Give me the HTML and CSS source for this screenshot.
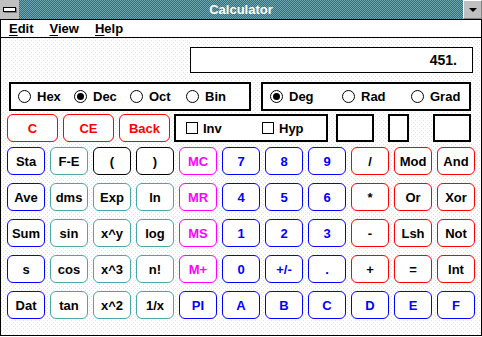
FILE: index.html
```html
<!DOCTYPE html>
<html lang="en">
<head>
  <meta charset="UTF-8" />
  <title>Calculator</title>
  <link rel="stylesheet" href="styles.css">
</head>
<body>
  <div class="window">
    <div class="titlebar">
      <div class="sysbox"><span class="sysbar"></span></div>
      <div class="title">Calculator</div>
      <div class="minbtn"><span class="tri"></span></div>
    </div>

    <div class="frame">
      <div class="menubar">
        <span class="menu"><u>E</u>dit</span>
        <span class="menu"><u>V</u>iew</span>
        <span class="menu"><u>H</u>elp</span>
      </div>

      <div class="panel">
        <div class="display-row">
          <div class="display">451.</div>
        </div>

        <div class="mode-row">
          <div class="group base">
            <span class="radio w56"><span class="circle"></span>Hex</span>
            <span class="radio w56"><span class="circle on"></span>Dec</span>
            <span class="radio w56"><span class="circle"></span>Oct</span>
            <span class="radio"><span class="circle"></span>Bin</span>
          </div>
          <div class="group angle">
            <span class="radio w72"><span class="circle on"></span>Deg</span>
            <span class="radio w69"><span class="circle"></span>Rad</span>
            <span class="radio"><span class="circle"></span>Grad</span>
          </div>
        </div>

        <div class="ctrl-row">
          <button class="btn clear red-text">C</button>
          <button class="btn clear red-text">CE</button>
          <button class="btn clear red-text">Back</button>
          <div class="group checks">
            <span class="check w76"><span class="square"></span>Inv</span>
            <span class="check"><span class="square"></span>Hyp</span>
          </div>
          <div class="group mem m1"></div>
          <div class="group mem m2"></div>
          <div class="group mem m3"></div>
        </div>

        <div class="keys">
          <button class="btn stat">Sta</button>
          <button class="btn sci">F-E</button>
          <button class="btn plain">(</button>
          <button class="btn plain">)</button>
          <button class="btn memk">MC</button>
          <button class="btn digit">7</button>
          <button class="btn digit">8</button>
          <button class="btn digit">9</button>
          <button class="btn op">/</button>
          <button class="btn op">Mod</button>
          <button class="btn op">And</button>

          <button class="btn stat">Ave</button>
          <button class="btn sci">dms</button>
          <button class="btn sci">Exp</button>
          <button class="btn sci">ln</button>
          <button class="btn memk">MR</button>
          <button class="btn digit">4</button>
          <button class="btn digit">5</button>
          <button class="btn digit">6</button>
          <button class="btn op">*</button>
          <button class="btn op">Or</button>
          <button class="btn op">Xor</button>

          <button class="btn stat">Sum</button>
          <button class="btn sci">sin</button>
          <button class="btn sci">x^y</button>
          <button class="btn sci">log</button>
          <button class="btn memk">MS</button>
          <button class="btn digit">1</button>
          <button class="btn digit">2</button>
          <button class="btn digit">3</button>
          <button class="btn op">-</button>
          <button class="btn op">Lsh</button>
          <button class="btn op">Not</button>

          <button class="btn stat">s</button>
          <button class="btn sci">cos</button>
          <button class="btn sci">x^3</button>
          <button class="btn sci">n!</button>
          <button class="btn memk">M+</button>
          <button class="btn digit">0</button>
          <button class="btn digit">+/-</button>
          <button class="btn digit">.</button>
          <button class="btn op">+</button>
          <button class="btn op">=</button>
          <button class="btn op">Int</button>

          <button class="btn stat">Dat</button>
          <button class="btn sci">tan</button>
          <button class="btn sci">x^2</button>
          <button class="btn sci">1/x</button>
          <button class="btn digit">PI</button>
          <button class="btn digit">A</button>
          <button class="btn digit">B</button>
          <button class="btn digit">C</button>
          <button class="btn digit">D</button>
          <button class="btn digit">E</button>
          <button class="btn digit">F</button>
        </div>
      </div>
    </div>
  </div>
</body>
</html>
```

FILE: styles.css
```css
* { box-sizing: border-box; }
body { margin: 0; background: #fff; font-family: "Liberation Sans", Arial, sans-serif; font-weight: bold; font-size: 13px; color: #000; }

.window { width: 482px; height: 336px; display: flex; flex-direction: column; }

/* title bar */
.titlebar { height: 20px; display: flex; border-bottom: 1px solid #000; background: repeating-conic-gradient(#3464a4 0 25%, #70a8b0 0 50%) 0 0 / 2px 2px; }
.sysbox { width: 19px; background: #c0c0c0; display: flex; align-items: center; justify-content: center; }
.sysbar { width: 13px; height: 5px; background: #fff; border: 1px solid #000; box-shadow: 1px 1px 0 #808080; }
.title { flex: 1; color: #fff; text-align: center; line-height: 19px; }
.minbtn { width: 19px; background: #c0c0c0; border-top: 1px solid #fff; border-left: 1px solid #fff; border-right: 1px solid #808080; border-bottom: 1px solid #808080; display: flex; align-items: center; justify-content: center; }
.tri { width: 0; height: 0; border-left: 4px solid transparent; border-right: 4px solid transparent; border-top: 4px solid #000; }

/* frame + menu */
.frame { flex: 1; border: 1px solid #000; border-top: 0; display: flex; flex-direction: column; }
.menubar { height: 18px; border-bottom: 1px solid #000; display: flex; gap: 16px; padding-left: 8px; line-height: 17px; background: #fff; }
.menu u { text-decoration-thickness: 1px; text-underline-offset: 2px; }

/* dotted yellow dither behind the keypad */
.panel { flex: 1; padding-left: 6px; background: #fff url("data:image/svg+xml;utf8,<svg xmlns='http://www.w3.org/2000/svg' width='4' height='4' shape-rendering='crispEdges'><rect width='1' height='1' fill='%23ffff00'/><rect x='2' y='2' width='1' height='1' fill='%23ffff00'/></svg>") 0 0 / 4px 4px; }

.display-row { margin-top: 9px; display: flex; justify-content: flex-end; padding-right: 8px; }
.display { width: 283px; height: 26px; border: 1px solid #000; background: #fff; text-align: right; padding-right: 15px; font-size: 14px; line-height: 24px; }

.group { border: 2px solid #000; background: #fff; display: flex; align-items: center; }

.mode-row { margin-top: 9px; display: flex; height: 29px; }
.base { margin-left: 2px; width: 242px; padding-left: 7px; }
.angle { margin-left: 10px; width: 210px; padding-left: 7px; }

.radio, .check { display: flex; align-items: center; }
.w56 { width: 56px; }
.w72 { width: 72px; }
.w69 { width: 69px; }
.w76 { width: 76px; }
.circle { width: 13px; height: 13px; border: 1px solid #000; border-radius: 50%; margin-right: 6px; display: flex; align-items: center; justify-content: center; }
.circle.on::after { content: ""; width: 7px; height: 7px; border-radius: 50%; background: #000; }
.square { width: 12px; height: 12px; border: 1px solid #000; margin-right: 5px; }

.ctrl-row { margin-top: 3px; display: flex; height: 28px; }
.clear { width: 51px; margin-right: 5px; }
.checks { width: 154px; padding-left: 10px; margin-left: -1px; }
.m1 { width: 38px; margin-left: 8px; }
.m2 { width: 21px; margin-left: 14px; }
.m3 { width: 38px; margin-left: 24px; }

.keys { margin-top: 5px; display: grid; grid-template-columns: repeat(11, 38px); grid-auto-rows: 28px; column-gap: 5px; row-gap: 8px; }

.btn { font: inherit; padding: 0; background: #fff; border: 1px solid #000; border-radius: 6px; color: #000; }
.red-text { border-color: #ff0000; color: #ff0000; }
.stat { border-color: #0000ff; }
.sci { border-color: #48a8a8; }
.plain { border-color: #000; }
.memk { border-color: #ff00ff; color: #ff00ff; }
.digit { border-color: #0000ff; color: #0000ff; }
.op { border-color: #ff0000; }
```
